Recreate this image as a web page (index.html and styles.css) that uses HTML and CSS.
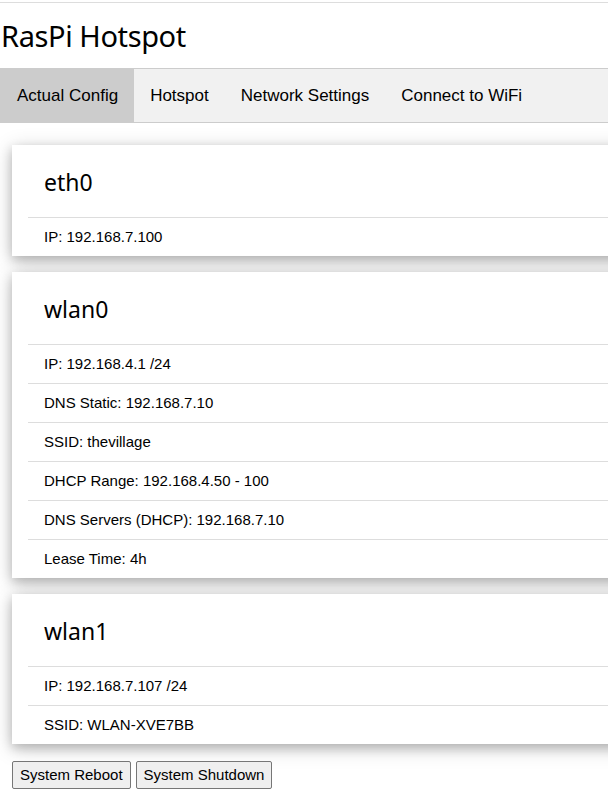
FILE: index.html
```html
<!DOCTYPE html>
<html>
<head>
<meta charset="utf-8">
<link rel="stylesheet" href="styles.css">
</head>
<body>
<header class="header">
  <h1 class="title">RasPi Hotspot</h1>
</header>
<nav class="tabs">
  <a class="tab active">Actual Config</a>
  <a class="tab">Hotspot</a>
  <a class="tab">Network Settings</a>
  <a class="tab">Connect to WiFi</a>
</nav>
<main class="cards">
  <section class="card">
    <h2 class="card-title">eth0</h2>
    <ul class="list">
      <li>IP: 192.168.7.100</li>
    </ul>
  </section>
  <section class="card">
    <h2 class="card-title">wlan0</h2>
    <ul class="list">
      <li>IP: 192.168.4.1 /24</li>
      <li>DNS Static: 192.168.7.10</li>
      <li>SSID: thevillage</li>
      <li>DHCP Range: 192.168.4.50 - 100</li>
      <li>DNS Servers (DHCP): 192.168.7.10</li>
      <li>Lease Time: 4h</li>
    </ul>
  </section>
  <section class="card">
    <h2 class="card-title">wlan1</h2>
    <ul class="list">
      <li>IP: 192.168.7.107 /24</li>
      <li>SSID: WLAN-XVE7BB</li>
    </ul>
  </section>
</main>
<div class="actions">
  <button class="btn">System Reboot</button>
  <button class="btn">System Shutdown</button>
</div>
</body>
</html>
```

FILE: styles.css
```css
html, body {
  margin: 0;
  padding: 0;
  overflow-x: hidden;
}
body {
  font-family: "Liberation Sans", Arial, sans-serif;
  font-size: 15px;
  color: #000;
  background: #fff;
}
.header {
  margin-top: 2px;
  border-top: 1px solid #ddd;
  height: 65px;
  display: flex;
  align-items: center;
}
.title {
  margin: 0;
  font-family: "Noto Sans", "Open Sans", sans-serif;
  font-weight: 400;
  font-size: 29px;
  line-height: 40px;
  padding-left: 1px;
  letter-spacing: -0.4px;
}
.tabs {
  display: flex;
  background: #f1f1f1;
  border: 1px solid #ccc;
  margin-right: -60px;
}
.tab {
  font-size: 17px;
  line-height: 25px;
  padding: 14px 16px;
  color: #000;
}
.tab.active {
  background: #ccc;
}
.cards {
  margin: 22px -60px 0 12px;
}
.card {
  background: #fff;
  margin-bottom: 16px;
  padding: 0 16px;
  box-shadow: 0 4px 10px 0 rgba(0,0,0,0.2), 0 4px 20px 0 rgba(0,0,0,0.19);
}
.card-title {
  margin: 0;
  padding: 19px 16px 17px;
  font-family: "Noto Sans", "Open Sans", sans-serif;
  font-weight: 400;
  font-size: 23px;
  line-height: 36px;
  border-bottom: 1px solid #ddd;
}
.list {
  list-style: none;
  margin: 0;
  padding: 0;
}
.list li {
  padding: 8px 16px;
  line-height: 22px;
  border-bottom: 1px solid #ddd;
}
.list li:last-child {
  border-bottom: none;
}
.actions {
  display: flex;
  gap: 5px;
  margin: 17px 0 0 12px;
}
.btn {
  font-family: "Liberation Sans", Arial, sans-serif;
  font-size: 15px;
  color: #000;
  background: #efefef;
  border: 1px solid #767676;
  border-radius: 2px;
  padding: 4px 7px;
  line-height: 18px;
}
```
